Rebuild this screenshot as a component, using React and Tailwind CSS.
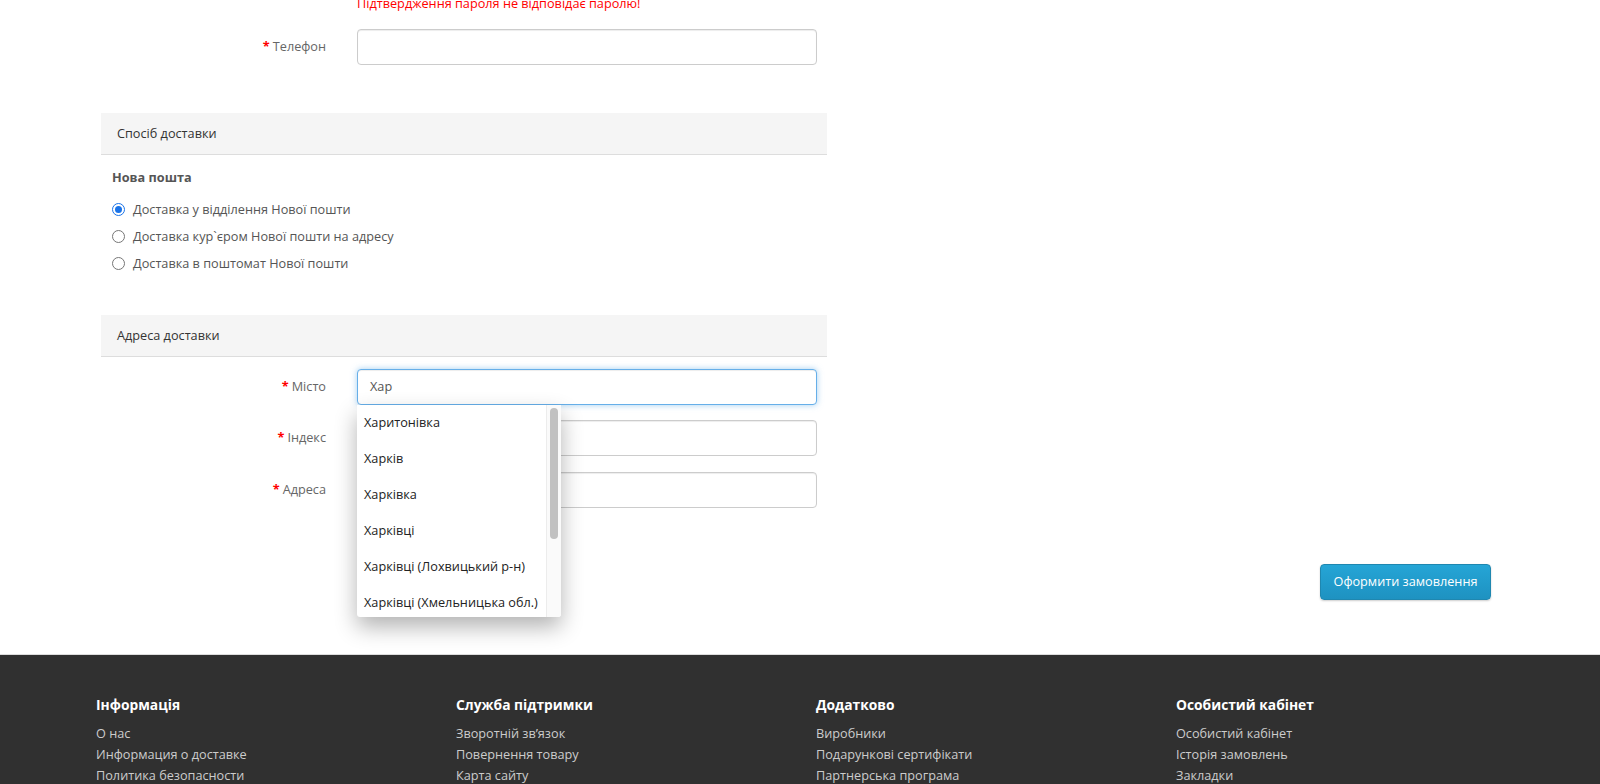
import React from 'react'

const cities = [
    'Харитонівка',
    'Харків',
    'Харківка',
    'Харківці',
    'Харківці (Лохвицький р-н)',
    'Харківці (Хмельницька обл.)'
]

const radios = [
    { label: 'Доставка у відділення Нової пошти', checked: true },
    { label: 'Доставка кур`єром Нової пошти на адресу', checked: false },
    { label: 'Доставка в поштомат Нової пошти', checked: false }
]

const footerCols = [
    { title: 'Інформація', links: ['О нас', 'Информация о доставке', 'Политика безопасности'] },
    { title: 'Служба підтримки', links: ['Зворотній зв’язок', 'Повернення товару', 'Карта сайту'] },
    { title: 'Додатково', links: ['Виробники', 'Подарункові сертифікати', 'Партнерська програма'] },
    { title: 'Особистий кабінет', links: ['Особистий кабінет', 'Історія замовлень', 'Закладки'] }
]

const Label = ({ children }) => (
    <label className="w-[256px] shrink-0 pr-[31px] text-right text-[12.7px] text-[#666]">
        <span className="text-[#f00] font-bold mr-[3px]">*</span>
        {children}
    </label>
)

const Input = ({ focused, value }) => (
    <div
        className={
            focused
                ? 'w-[460px] h-[36px] rounded-[4px] border border-[#66afe9] bg-white px-[12px] flex items-center text-[12.7px] text-[#555] shadow-[inset_0_1px_1px_rgba(0,0,0,0.075),0_0_6px_rgba(102,175,233,0.6)]'
                : 'w-[460px] h-[36px] rounded-[4px] border border-[#ccc] bg-white px-[12px] flex items-center text-[12.7px] text-[#555] shadow-[inset_0_1px_1px_rgba(0,0,0,0.075)]'
        }>
        {value}
    </div>
)

const Row = ({ label, children, className }) => (
    <div className={'flex items-center h-[36px] ' + (className || '')}>
        <Label>{label}</Label>
        {children}
    </div>
)

const SectionHead = ({ children, className }) => (
    <div
        className={
            'h-[42px] bg-[#f5f5f5] border-b border-[#ddd] pl-[16px] flex items-center text-[12.7px] text-[#333] ' +
            (className || '')
        }>
        {children}
    </div>
)

const Radio = ({ checked, label }) => (
    <div className="h-[27px] flex items-center pl-[11px]">
        {checked ? (
            <span className="w-[13px] h-[13px] rounded-full border-[1.5px] border-[#1a73e8] flex items-center justify-center">
                <span className="w-[7px] h-[7px] rounded-full bg-[#1a73e8]" />
            </span>
        ) : (
            <span className="w-[13px] h-[13px] rounded-full border border-[#767676] bg-white" />
        )}
        <span className="ml-[8px] text-[12.7px] text-[#555]">{label}</span>
    </div>
)

const CityDropdown = () => (
    <div className="absolute top-full left-0 w-[204px] h-[212px] bg-white rounded-b-[3px] overflow-hidden shadow-[0_10px_22px_rgba(0,0,0,0.3)] z-10 flex">
        <div className="flex-1">
            {cities.map((c) => (
                <div key={c} className="h-[36px] pl-[7px] flex items-center text-[12.7px] text-[#222] whitespace-nowrap">
                    {c}
                </div>
            ))}
        </div>
        <div className="w-[15px] shrink-0 bg-[#fafafa] border-l border-[#ececec] pt-[3px] pl-[3px]">
            <div className="w-[8px] h-[131px] rounded-full bg-[#c1c1c1]" />
        </div>
    </div>
)

export default function App() {
    return (
        <div className="min-h-[784px] bg-white overflow-hidden font-['Open_Sans',sans-serif]">
            <div className="w-[1440px] mx-auto px-[15px]">
                <div className="w-[726px] ml-[6px]">
                    <div className="-mt-[6px] h-[18px] leading-[18px] pl-[256px] text-[12.7px] text-[#f00]">
                        Підтвердження пароля не відповідає паролю!
                    </div>
                    <Row label="Телефон" className="mt-[17px]">
                        <Input />
                    </Row>

                    <SectionHead className="mt-[48px]">Спосіб доставки</SectionHead>
                    <div className="mt-[13px] pl-[11px] h-[18px] leading-[18px] text-[12.7px] font-bold text-[#555]">
                        Нова пошта
                    </div>
                    <div className="mt-[10px]">
                        {radios.map((r) => (
                            <Radio key={r.label} {...r} />
                        ))}
                    </div>

                    <SectionHead className="mt-[38px]">Адреса доставки</SectionHead>
                    <Row label="Місто" className="mt-[12px] relative z-10">
                        <div className="relative">
                            <Input focused value="Хар" />
                            <CityDropdown />
                        </div>
                    </Row>
                    <Row label="Індекс" className="mt-[15px]">
                        <Input />
                    </Row>
                    <Row label="Адреса" className="mt-[16px]">
                        <Input />
                    </Row>
                </div>

                <div className="flex justify-end pr-[14px] mt-[56px]">
                    <button className="w-[171px] h-[36px] rounded-[4px] border border-[#1f87b0] bg-gradient-to-b from-[#25a5d6] to-[#1e92c1] text-white text-[12.7px] shadow-[0_1px_2px_rgba(0,0,0,0.2)]">
                        Оформити замовлення
                    </button>
                </div>
            </div>

            <footer className="mt-[54px] border-t border-[#ddd] bg-[#303030] pt-[40px] pb-[20px]">
                <div className="w-[1440px] mx-auto grid grid-cols-4">
                    {footerCols.map((col) => (
                        <div key={col.title} className="pl-[16px] pr-[14px]">
                            <h5 className="h-[20px] leading-[20px] text-[13.8px] font-bold text-white">
                                {col.title}
                            </h5>
                            <ul className="mt-[8px]">
                                {col.links.map((l) => (
                                    <li key={l} className="h-[21px] leading-[21px] text-[12.7px] text-[#ccc]">
                                        {l}
                                    </li>
                                ))}
                            </ul>
                        </div>
                    ))}
                </div>
            </footer>
        </div>
    )
}
